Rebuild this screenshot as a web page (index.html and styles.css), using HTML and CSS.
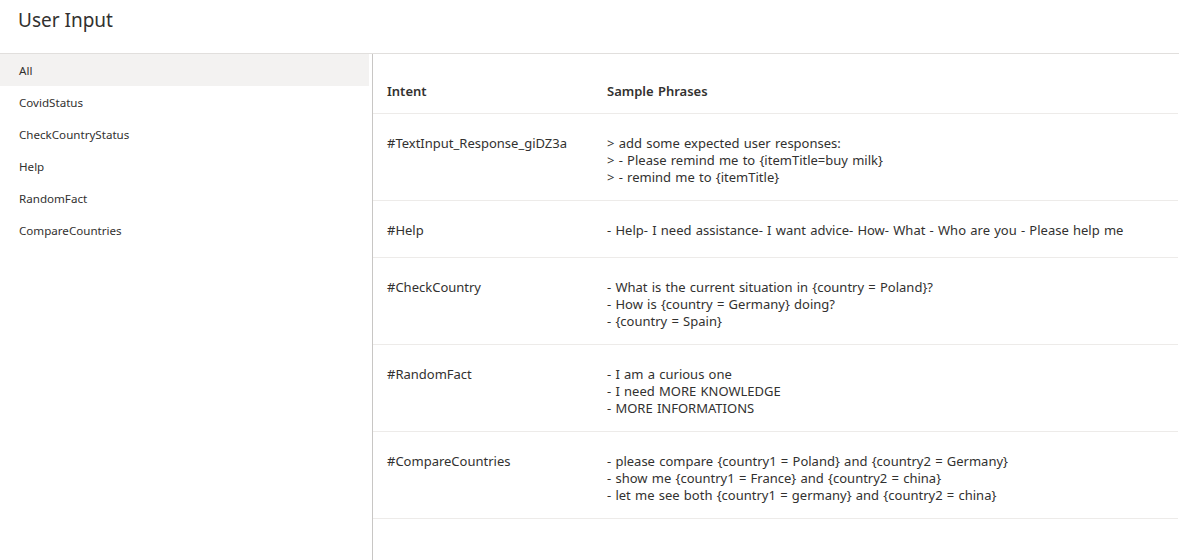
FILE: index.html
```html
<!DOCTYPE html>
<html lang="en">
<head>
<meta charset="utf-8">
<title>User Input</title>
<link rel="stylesheet" href="styles.css">
</head>
<body>
<header class="page-header">
  <h1 class="page-title">User Input</h1>
</header>
<main class="layout">
  <nav class="sidebar">
    <div class="nav-item selected">All</div>
    <div class="nav-item">CovidStatus</div>
    <div class="nav-item">CheckCountryStatus</div>
    <div class="nav-item">Help</div>
    <div class="nav-item">RandomFact</div>
    <div class="nav-item">CompareCountries</div>
  </nav>
  <section class="content">
    <div class="row head">
      <div class="cell intent">Intent</div>
      <div class="cell phrases">Sample Phrases</div>
    </div>
    <div class="row">
      <div class="cell intent">#TextInput_Response_giDZ3a</div>
      <div class="cell phrases">&gt; add some expected user responses:<br>&gt; - Please remind me to {itemTitle=buy milk}<br>&gt; - remind me to {itemTitle}</div>
    </div>
    <div class="row">
      <div class="cell intent">#Help</div>
      <div class="cell phrases">- Help- I need assistance- I want advice- How- What - Who are you - Please help me</div>
    </div>
    <div class="row">
      <div class="cell intent">#CheckCountry</div>
      <div class="cell phrases">- What is the current situation in {country = Poland}?<br>- How is {country = Germany} doing?<br>- {country = Spain}</div>
    </div>
    <div class="row">
      <div class="cell intent">#RandomFact</div>
      <div class="cell phrases">- I am a curious one<br>- I need MORE KNOWLEDGE<br>- MORE INFORMATIONS</div>
    </div>
    <div class="row">
      <div class="cell intent">#CompareCountries</div>
      <div class="cell phrases">- please compare {country1 = Poland} and {country2 = Germany}<br>- show me {country1 = France} and {country2 = china}<br>- let me see both {country1 = germany} and {country2 = china}</div>
    </div>
  </section>
</main>
</body>
</html>
```

FILE: styles.css
```css
* { box-sizing: border-box; }
html, body { margin: 0; padding: 0; }
body {
  font-family: "Noto Sans", "Open Sans", sans-serif;
  color: #323130;
  background: #ffffff;
  width: 1179px;
  height: 560px;
  overflow: hidden;
}
.page-header {
  height: 54px;
  border-bottom: 1px solid #e1dfdd;
  padding-left: 18px;
}
.page-title {
  margin: 0;
  padding-top: 6px;
  font-size: 19px;
  line-height: 28px;
  font-weight: 400;
}
.layout {
  display: flex;
  height: 506px;
}
.sidebar {
  width: 373px;
  flex: none;
  border-right: 1px solid #c8c6c4;
  padding-right: 3px;
}
.nav-item {
  height: 32px;
  line-height: 32px;
  padding-top: 1px;
  padding-left: 19px;
  font-size: 11.6px;
}
.nav-item.selected {
  background: #f3f2f1;
}
.content {
  flex: 1;
  margin-right: 1px;
}
.row {
  display: flex;
  border-bottom: 1px solid #edebe9;
  min-height: 57px;
}
.row.head {
  min-height: 0;
  height: 60px;
  padding-top: 27px;
  font-weight: 600;
}
.cell {
  font-size: 13px;
  line-height: 17px;
  word-spacing: 0.85px;
  padding-top: 21px;
  padding-bottom: 14px;
}
.row.head .cell {
  padding-top: 0;
  padding-bottom: 0;
  line-height: 20px;
}
.intent {
  width: 234px;
  flex: none;
  padding-left: 14px;
}
.phrases {
  flex: 1;
}
```
